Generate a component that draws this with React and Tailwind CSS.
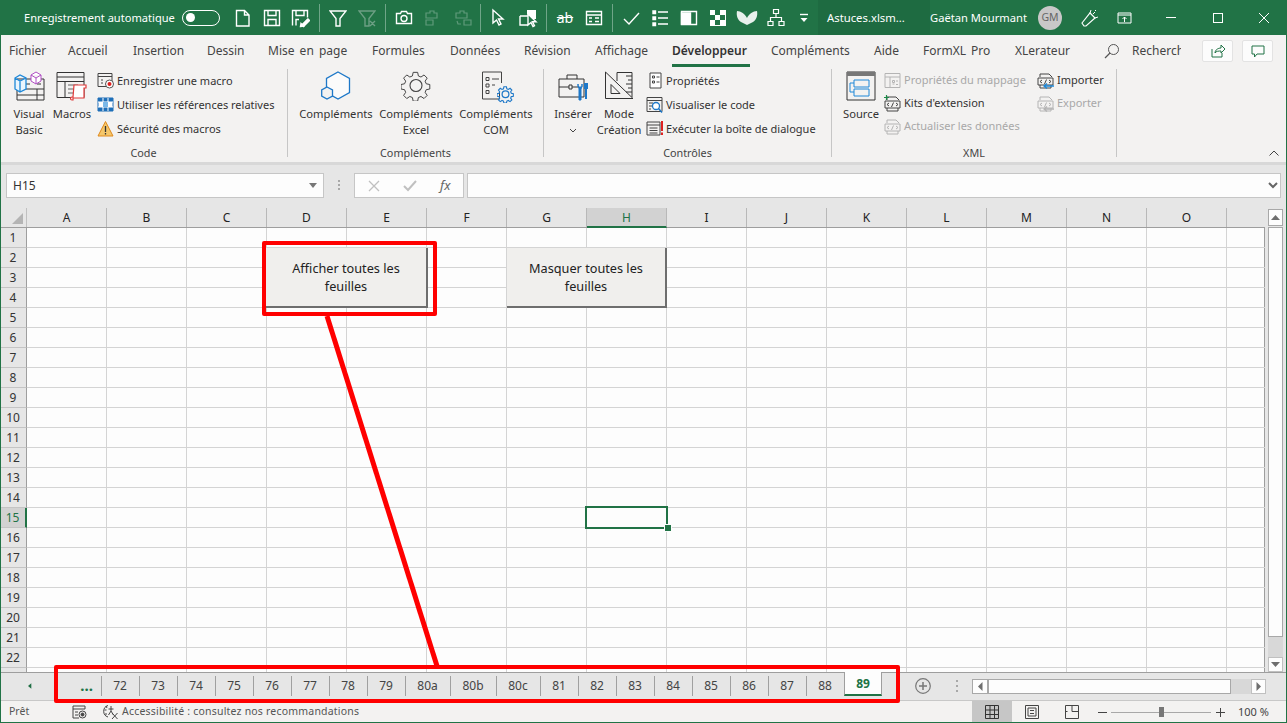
import React from "react";

const FONT = "font-['Open_Sans','Noto_Sans',sans-serif]";

/* ---------- title bar icons ---------- */
const W = ({ w = 20, h = 20, c = "#fff", children, sw = 1.4 }) => (
  <svg width={w} height={h} viewBox={`0 0 ${w} ${h}`} fill="none" stroke={c} strokeWidth={sw}>
    {children}
  </svg>
);
const Slot = ({ className = "", children }) => (
  <div className={`h-[35px] w-[28px] flex items-center justify-center shrink-0 ${className}`}>{children}</div>
);
const Sep = ({ className = "" }) => <div className={`w-px h-[28px] bg-[#6fa588] shrink-0 ${className}`} />;

const TitleIcons = () => (
  <div className="flex items-center">
    <Slot className="ml-[9px]"><W><path d="M3.5 2.5h8l4.5 4.5v11H3.5zM11.5 2.5V7H16" /></W></Slot>
    <Slot className="ml-px"><W><path d="M2.5 2.5h15v15h-15zM6 2.5v5h8v-5M6 17.5v-6h8v6" /></W></Slot>
    <Slot><W><path d="M2.5 17.5v-15h15v7M6 2.5v5h8v-5M6 17.5v-6h3M11 18l7-7M10.5 18.5l3-.5-2.500-2.500z" /><path d="M12 17l6-6 1.500 1.500-6 6z" fill="#fff" /></W></Slot>
    <Sep className="ml-[5px]" />
    <Slot className="ml-[4px]"><W w={18}><path d="M1 3h16l-6 7.500V18H7v-7.500z" /></W></Slot>
    <Slot className="ml-px"><W w={18} c="#6c9f84"><path d="M1 3h16l-6 7.500V18H7v-7.500zM12 13l5 5M17 13l-5 5" /></W></Slot>
    <Sep className="ml-[4px]" />
    <Slot className="ml-[4px]"><W w={18}><path d="M1.500 5.500h4l1-2h5l1 2h4v10h-15z" /><circle cx="9" cy="10.500" r="3" /></W></Slot>
    <Slot className="ml-px"><W c="#5f9a7a" sw={1.2}><path d="M7 3h4v2h3v5H3V5h4zM3 12h7v5H3z" /></W></Slot>
    <Slot className="ml-[2px]"><W c="#5f9a7a" sw={1.2}><path d="M7 3h4v2h3v5H3V5h4zM11 12h7v5h-7zM4 13l1 3h3" /></W></Slot>
    <Sep className="ml-[3px]" />
    <Slot className="ml-[3px]"><W><path d="M5 2v13l3.500-3 2.500 5 2-1-2.500-5h4.500z" /></W></Slot>
    <Slot className="ml-[2px]"><W><path d="M2 8h9M2 8v9h8" /><path d="M9 2h9v9l-4 0-5-5z" fill="#fff" stroke="none" /><path d="M10 6v11l3-2.500 2 4 1.500-.8-2-4H18z" fill="#217346" /></W></Slot>
    <Sep className="ml-[4px]" />
    <Slot className="ml-[4px]"><span className="text-white text-[14px] leading-none line-through">ab</span></Slot>
    <Slot className="ml-px"><W><path d="M2.500 3.500h15v13h-15zM2.500 7h15" /><path d="M5 10h3M5 13.500h3M11 10h4M11 13.500h4" /></W></Slot>
    <Sep className="ml-[4px]" />
    <Slot className="ml-[4px]"><W><path d="M3 11l5 5L18 5" /></W></Slot>
    <Slot className="ml-px"><W><path d="M3 3h2.500v2.500H3zM3 9h2.500v2.500H3zM3 15h2.500v2.500H3z" fill="#fff" /><path d="M8 4h10M8 10h10M8 16h10" /></W></Slot>
    <Slot className="ml-px"><W><path d="M2.500 3.500h15v13h-15z" /><path d="M2.500 5h9v11h-9z" fill="#fff" /></W></Slot>
    <Slot className="ml-px"><W w={18} h={18}><rect x="1" y="1" width="16" height="16" fill="#fff" stroke="none" /><path d="M6 1h5v5H6zM1 6h5v5H1zM11 6h5v5h-5zM6 11h5v5H6z" fill="#217346" stroke="none" /></W></Slot>
    <Slot className="ml-px"><W w={22} h={18}><path d="M1 2c4 0 8 3 10 7 2-4 6-7 10-7 1 5-1 9-4 11-2 1-4 2-6 3-2-1-4-2-6-3C2 11 0 7 1 2z" fill="#e8f0ec" stroke="none" /></W></Slot>
    <Slot className="ml-px"><W w={18} sw={1.2}><path d="M6.500 1.500h5v4h-5zM1 13.500h5v4H1zM12 13.500h5v4h-5zM9 5.500v4M3.500 13.500v-4h11v4" /></W></Slot>
    <Slot className="w-[27px]"><W w={10} h={10}><path d="M1 1.500h8" /><path d="M1.500 5h7L5 9z" fill="#fff" stroke="none" /></W></Slot>
  </div>
);

/* ---------- ribbon big icons ---------- */
const VB = () => (
  <svg width="32" height="30" viewBox="0 0 32 30" fill="none">
    <path d="M4 8h27v21H4zM4 18h27M4 24h27M24 18v11M12 13h5M24 13h4" stroke="#333" strokeWidth="1" />
    <path d="M18 4l5-3 5 3v6l-5 3-5-3zM18 4l5 3 5-3M23 7v6" stroke="#b04fc4" fill="#fff" strokeWidth="1" />
    <path d="M2 7l5-3 6 3v11l-6 3-5-3zM2 7l5 3 6-3M7 10v11" stroke="#1e88d8" fill="#eaf5fd" strokeWidth="1.300" />
  </svg>
);
const MacroI = () => (
  <svg width="32" height="30" viewBox="0 0 32 30" fill="none">
    <path d="M1 1.500h27v25H1zM1 6h27M1 10.500h27M9 10.500v16" stroke="#333" />
    <path d="M12 14h10M12 18h6M12 22h6" stroke="#666" />
    <path d="M18 14h12v3h-2v10h-11v2h-1c-2 0-2-3 0-3h1z" fill="#fff" stroke="#e03a3a" strokeWidth="1.200" />
  </svg>
);
const Hex = () => (
  <svg width="30" height="30" viewBox="0 0 30 30" fill="none" stroke="#1e78c8" strokeWidth="1.300">
    <path d="M17 1l11.500 6.500v14L17 28 5.500 21.500v-14z" fill="#fbfbfb" />
    <path d="M6 16l5.500 3v6L6 28 .7 25v-6z" fill="#f3f2f1" />
  </svg>
);
const Gear = ({ size = 30, color = "#444", sw = 1.1 }) => (
  <svg width={size} height={size} viewBox="0 0 30 30" fill="none" stroke={color} strokeWidth={sw}>
    <path d="M12.500 1.500h5l.8 4 2.900 1.200 3.400-2.300 3.500 3.500-2.300 3.400 1.200 2.900 4 .8v5l-4 .8-1.200 2.900 2.300 3.400-3.500 3.500-3.400-2.300-2.900 1.200-.8 4h-5l-.8-4-2.900-1.200-3.400 2.300-3.500-3.500 2.300-3.400-1.200-2.900-4-.8v-5l4-.8 1.200-2.900-2.300-3.400 3.500-3.500 3.400 2.300 2.900-1.200z" transform="scale(.9) translate(1 0)" />
    <circle cx="15" cy="14.500" r="6" />
  </svg>
);
const ComI = () => (
  <div className="relative w-[30px] h-[30px]">
    <svg width="30" height="30" viewBox="0 0 30 30" fill="none" stroke="#444">
      <path d="M1.500 1v27h17V21M1.500 1h19v11" />
      <path d="M5 6.500h3v3H5zM5 13h3v3H5zM5 19.500h3v3H5zM11 8h7M11 14h3" />
    </svg>
    <div className="absolute right-[-3px] bottom-[-2px]"><Gear size={17} color="#1e78c8" sw={2.200} /></div>
  </div>
);
const Brief = () => (
  <svg width="32" height="30" viewBox="0 0 32 30" fill="none">
    <path d="M2 8h25v18H2zM2 16h10M15 16h7M10 8V4h10v4" stroke="#333" />
    <path d="M12 14h3v4h-3z" stroke="#333" />
    <path d="M21 13c0 3 1 3 1 5v11h2V18c1-2 1-3 1-5v3h-4z" fill="#1e78c8" stroke="#1e78c8" />
    <path d="M27 12h4v6h-1v10h-2V18h-1z" fill="#1e78c8" />
  </svg>
);
const SetSq = () => (
  <svg width="30" height="30" viewBox="0 0 30 30" fill="none" stroke="#333">
    <path d="M1.500 1v26.500H29z" />
    <path d="M7 13.500v9h9zM13 10V1.500h15V26" />
    <path d="M22 5h6M24 9h4M22 13h6M24 17h4M22 21h6" />
  </svg>
);
const Src = () => (
  <svg width="30" height="30" viewBox="0 0 30 30" fill="none">
    <path d="M1 1h28v28H1z" stroke="#333" />
    <path d="M1 1h28v4H1z" fill="#777" />
    <path d="M8 9h15v7H8zM8 18h15v7H8zM8 12H4v9h4" stroke="#1e88d8" />
  </svg>
);
const Big = ({ icon, children, className = "" }) => (
  <div className={`flex flex-col items-center shrink-0 ${className}`}>
    <div className="h-[40px] pt-[5px] flex justify-center">{icon}</div>
    <div className="text-center leading-[16px] text-[11.200px] text-[#333] whitespace-pre-line">{children}</div>
  </div>
);

/* ---------- ribbon small icons ---------- */
const I16 = ({ children, w = 18 }) => (
  <svg width={w} height="18" viewBox={`0 0 ${w} 18`} fill="none" className="shrink-0">{children}</svg>
);
const RecI = () => (<I16><path d="M1 1.500h14v13H1zM1 4.500h14M4 8h2M4 11h2" stroke="#444" /><circle cx="12.500" cy="12" r="4" fill="#fff" stroke="#555" /><circle cx="12.500" cy="12" r="2" fill="#e02020" /></I16>);
const RefI = () => (<I16><path d="M1 2h15v13H1z" fill="#fff" stroke="#1e6fb8" /><path d="M1 2h15v4H1zM1 11h15v4H1z" fill="#1e6fb8" /><path d="M6 2v13M11 2v13M1 6h15M1 11h15" stroke="#fff" /><path d="M6 6h5v5H6z" fill="#7ab8e8" /></I16>);
const WarnI = () => (<I16><path d="M8.500 1.500L16 16H1z" fill="#f5c76a" stroke="#e08a1e" /><path d="M8.500 6v6M8.500 13v1.500" stroke="#333" strokeWidth="1.300" /></I16>);
const PropI = () => (<I16 w={16}><path d="M2 1h11v15H2z" fill="#fff" stroke="#444" /><path d="M4.500 4h2v2h-2zM4.500 9h2v2h-2zM8.500 5h3M8.500 10h3" stroke="#444" /></I16>);
const ViewI = () => (<I16><path d="M1 1.500h15v14H1zM1 4.500h15M3 7h4M3 10h3M3 13h2" stroke="#444" /><circle cx="10" cy="10" r="3.500" fill="#fff" stroke="#1e78c8" strokeWidth="1.300" /><path d="M12.500 12.500L16 16.500" stroke="#1e78c8" strokeWidth="1.500" /></I16>);
const RunI = () => (<I16><path d="M1 2h13v13H1zM1 5h13M3.500 8h8M3.500 10.500h8M3.500 13h8" stroke="#444" /><path d="M16 1v10M16 12.500v2.500" stroke="#e02020" strokeWidth="2" /></I16>);
const XmlBox = ({ c, plus, arrow }) => (
  <I16>
    <path d="M3 5V2h9l3 3M1 6h15v7H1zM3 13v3h11v-3" stroke={c} />
    <path d="M5 8l-2 1.500L5 11M12 8l2 1.500L12 11M9.500 7.500l-2 4.500" stroke={c} />
    {plus && <path d="M2.500 0v5M0 2.500h5" stroke="#1e8a4a" strokeWidth="1.200" />}
    {arrow && <path d="M17 14H7M10 11.500L7 14l3 2.500" stroke={arrow} strokeWidth="1.300" />}
  </I16>
);
const MapI = () => (<I16><path d="M1 1.500h15v14H1zM1 5h15M6 5v10.500M8.500 8.500h2v2h-2zM12 9h2M8.500 12h2M12 12.500h2" stroke="#b4b4b4" /></I16>);
const Small = ({ icon, children, disabled, className = "" }) => (
  <div className={`flex items-center whitespace-nowrap text-[11px] ${disabled ? "text-[#a8a8a8]" : "text-[#333]"} ${className}`}>
    {icon}<span className="ml-[2px]">{children}</span>
  </div>
);
const Group = ({ w, label, children }) => (
  <div className={`flex shrink-0 ${w}`}>
    <div className="flex-1 flex flex-col min-w-0">
      <div className="h-[79px] flex">{children}</div>
      <div className="h-[16px] leading-[16px] text-center text-[10.800px] text-[#444]">{label}</div>
    </div>
    <div className="w-px h-[88px] mt-[3px] bg-[#c6c6c6]" />
  </div>
);

/* ---------- tabs ---------- */
const TABS = [
  ["Fichier", "w-[59px]"], ["Accueil", "w-[65px]"], ["Insertion", "w-[74px]"], ["Dessin", "w-[61px]"],
  ["Mise en page", "w-[104px]"], ["Formules", "w-[78px]"], ["Données", "w-[74px]"], ["Révision", "w-[71px]"],
  ["Affichage", "w-[77px]"],
];
const TABS2 = [["Compléments", "w-[103px]"], ["Aide", "w-[49px]"], ["FormXL Pro", "w-[92px]"], ["XLerateur", "w-[89px]"]];

/* ---------- sheet ---------- */
const COLS = ["A","B","C","D","E","F","G","H","I","J","K","L","M","N","O",""];
const rows = Array.from({ length: 23 }, (_, i) => i + 1);
const cells = COLS.map((c, i) => i);

const Sheet = () => (
  <div className="w-[1265px] h-[464px] overflow-hidden">
    <div className="flex h-[20px] bg-[#e6e6e6] border-b border-[#9e9e9e]">
      <div className="w-[27px] shrink-0 border-r border-[#c0c0c0] relative">
        <div className="absolute left-[12px] top-[5px] w-[11px] h-[11px] bg-[#b4b4b4] [clip-path:polygon(100%_0,100%_100%,0_100%)]" />
      </div>
      {COLS.map((c) => (
        <div
          key={c || "p"}
          className={`shrink-0 flex items-center justify-center pt-px text-[12px] border-r border-[#b8b8b8] ${c === "" ? "w-[38px] border-r-0" : "w-[80px]"} ${c === "H" ? "bg-[#d2d2d2] text-[#217346] border-b-2 border-b-[#217346] -mb-px" : "text-[#222]"}`}
        >
          {c}
        </div>
      ))}
    </div>
    {rows.map((r) => (
      <div key={r} className="flex h-[20px] bg-[#fdfdfd] border-b border-[#d4d4d4]">
        <div className={`w-[27px] shrink-0 flex items-center justify-center pt-px text-[12px] -mb-px border-b ${r === 15 ? "bg-[#d2d2d2] text-[#217346] border-r-2 border-r-[#217346] border-b-[#c4c4c4]" : "bg-[#e6e6e6] text-[#333] border-r border-r-[#9e9e9e] border-b-[#c4c4c4]"}`}>
          {r <= 22 ? r : ""}
        </div>
        {cells.map((i) => (
          <div key={i} className={`shrink-0 border-r ${i === 15 ? "w-[38px] border-[#9e9e9e]" : "w-[80px] border-[#d4d4d4]"}`} />
        ))}
      </div>
    ))}
  </div>
);

const Arrow = ({ d }) => (
  <svg width="9" height="9" viewBox="0 0 9 9" fill="#6e6e6e"><path d={d} /></svg>
);

const VScroll = () => (
  <div className="w-[22px] h-[464px] bg-[#e6e6e6] pl-[3px] pt-px flex flex-col">
    <div className="w-[15px] h-[17px] bg-[#fdfdfd] border border-[#a8a8a8] flex items-center justify-center"><Arrow d="M0 7L4.500 2 9 7z" /></div>
    <div className="w-[15px] h-[412px] bg-[#fdfdfd] border border-[#a8a8a8] mt-px" />
    <div className="w-[15px] h-[20px] bg-[#d8d8d8]" />
    <div className="w-[15px] h-[15px] bg-[#fdfdfd] border border-[#c0c0c0] flex items-center justify-center"><Arrow d="M0 2h9L4.500 7z" /></div>
  </div>
);

const SHEETS = [
  ["72","w-[37px]"],["73","w-[37px]"],["74","w-[37px]"],["75","w-[37px]"],["76","w-[37px]"],["77","w-[37px]"],["78","w-[37px]"],["79","w-[37px]"],
  ["80a","w-[44px]"],["80b","w-[45px]"],["80c","w-[43px]"],
  ["81","w-[37px]"],["82","w-[37px]"],["83","w-[37px]"],["84","w-[37px]"],["85","w-[37px]"],["86","w-[37px]"],["87","w-[37px]"],["88","w-[37px]"],
];

const TabBar = () => (
  <div className="h-[28px] bg-[#e6e6e6] border-t border-[#9e9e9e] flex">
    <div className="w-[58px] shrink-0 flex items-center text-[#217346] pb-[2px]">
      <svg width="6" height="8" viewBox="0 0 6 8" className="ml-[28px]" fill="#1f6e43"><path d="M5 0v8L0 4z" /></svg>
      <svg width="6" height="8" viewBox="0 0 6 8" className="ml-[22px]" fill="#c8c8c8"><path d="M0 0v8l5-4z" /></svg>
    </div>
    <div className="w-[43px] shrink-0 flex items-center justify-end pr-[8px] text-[15px] font-bold text-[#217346] leading-none pb-[2px]">...</div>
    {SHEETS.map(([n, w]) => (
      <React.Fragment key={n}>
        <div className="w-px h-[20px] mt-[3px] bg-[#a0a0a0] shrink-0" />
        <div className={`${w} h-[23px] pt-[2px] pr-px shrink-0 flex items-center justify-center text-[12px] text-[#444]`}>{n}</div>
      </React.Fragment>
    ))}
    <div className="w-[38px] h-[24px] -mt-px pt-[2px] bg-[#fdfdfd] border-x border-[#9e9e9e] border-b-2 border-b-[#217346] shrink-0 flex items-center justify-center text-[12px] font-bold text-[#217346]">89</div>
    <div className="w-[34px] shrink-0" />
    <svg width="16" height="16" viewBox="0 0 16 16" fill="none" stroke="#777" className="shrink-0 ml-[-1px] mt-[5px]"><circle cx="8" cy="8" r="7.300" strokeWidth="1.200" /><path d="M4 8h8M8 4v8" strokeWidth="1.500" /></svg>
    <div className="ml-[25px] mt-[7px] flex flex-col gap-[3px] shrink-0">
      <div className="w-[2px] h-[2px] bg-[#a8a8a8]" /><div className="w-[2px] h-[2px] bg-[#a8a8a8]" /><div className="w-[2px] h-[2px] bg-[#a8a8a8]" />
    </div>
    <div className="ml-[14px] mt-[6px] h-[15px] flex shrink-0">
      <div className="w-[16px] bg-[#fdfdfd] border border-[#a8a8a8] flex items-center justify-center"><Arrow d="M6.500 0v9L2 4.500z" /></div>
      <div className="w-[243px] bg-[#fdfdfd] border border-[#a8a8a8]" />
      <div className="w-[20px] bg-[#d8d8d8]" />
      <div className="w-[15px] bg-[#fdfdfd] border border-[#c0c0c0] flex items-center justify-center"><Arrow d="M2.500 0v9L7 4.500z" /></div>
    </div>
  </div>
);

const StatusBar = () => (
  <div className="h-[23px] bg-[#f3f2f1] border-t border-[#c8c8c8] flex items-center text-[10.500px] text-[#555]">
    <div className="ml-[9px] w-[63px] pb-px text-[10.500px]">Prêt</div>
    <svg width="15" height="14" viewBox="0 0 15 14" fill="none" stroke="#444" className="shrink-0"><path d="M1 1h12v3H1zM1 4v9h6M3 7h3M3 10h3" /><circle cx="10.500" cy="9.500" r="3.500" /><circle cx="10.500" cy="9.500" r="1.500" fill="#444" /></svg>
    <svg width="16" height="16" viewBox="0 0 16 16" fill="none" stroke="#444" className="ml-[16px] shrink-0"><path d="M5 1.500A6 6 0 0 0 5 13M3 2l1 2M1.500 6h2M2 10h2" /><path d="M8 2v5M5.500 5h5M8 7l-2.500 4M8 7l2.500 4M9 9l5.500 6M14.500 9L9 15" /></svg>
    <div className="ml-[3px] w-[850px] pb-px whitespace-nowrap tracking-[.2px]">Accessibilité : consultez nos recommandations</div>
    <div className="w-[40px] h-[22px] bg-[#c6c6c6] flex items-center justify-center shrink-0">
      <svg width="14" height="14" viewBox="0 0 14 14" fill="none" stroke="#333"><path d="M.5.500h13v13H.5zM5 .5v13M9.500.5v13M.5 5h13M.5 9.500h13" /></svg>
    </div>
    <div className="w-[40px] flex items-center justify-center shrink-0">
      <svg width="14" height="14" viewBox="0 0 14 14" fill="none" stroke="#444"><path d="M.5.500h13v13H.5zM3 3h8v8H3zM5 5.500h4M5 8.500h4" /></svg>
    </div>
    <div className="w-[40px] flex items-center justify-center shrink-0">
      <svg width="14" height="14" viewBox="0 0 14 14" fill="none" stroke="#444"><path d="M.5.500h13v13H.5zM7 .5v6M.5 6.500h2M7 6.500h6.500" /></svg>
    </div>
    <div className="ml-[6px] w-[9px] h-px bg-[#444] shrink-0" />
    <div className="ml-[4px] w-[100px] h-[14px] relative shrink-0 flex items-center">
      <div className="w-full h-px bg-[#a8a8a8]" />
      <div className="absolute left-[48px] top-[2px] w-[5px] h-[10px] bg-[#777]" />
    </div>
    <svg width="9" height="9" viewBox="0 0 9 9" stroke="#444" className="ml-[5px] shrink-0"><path d="M0 4.500h9M4.500 0v9" /></svg>
    <div className="ml-[13px] whitespace-nowrap text-[11px] text-[#444]">100 %</div>
  </div>
);

export default function App() {
  return (
    <div className={`relative w-[1287px] h-[723px] overflow-hidden bg-[#f3f2f1] ${FONT}`}>
      {/* Title bar */}
      <div className="h-[35px] bg-[#217346] flex items-center text-white">
        <div className="ml-[24px] w-[158px] pt-px text-[11.100px] whitespace-nowrap">Enregistrement automatique</div>
        <div className="w-[38px] h-[16px] rounded-full border border-white flex items-center pl-[3px] shrink-0">
          <div className="w-[9px] h-[9px] rounded-full bg-white" />
        </div>
        <TitleIcons />
        <div className="h-[35px] w-[112px] bg-[#1e6b41] pl-[9px] pt-px flex items-center text-[11.300px] whitespace-nowrap shrink-0">Astuces.xlsm...</div>
        <div className="text-[11.200px] pt-px whitespace-nowrap w-[108px] shrink-0">Gaëtan Mourmant</div>
        <div className="w-[24px] h-[24px] rounded-full bg-[#c8c8c8] text-[#666] text-[10.500px] flex items-center justify-center shrink-0">GM</div>
        <svg width="18" height="18" viewBox="0 0 18 18" fill="none" stroke="#fff" className="ml-[19px] shrink-0"><path d="M1 14l8-10 5 5-9 8H3z" strokeWidth="1.200" /><path d="M9 4l1-3M14 9l3-1M12 5l2-2M14 1l1 1" /></svg>
        <svg width="16" height="14" viewBox="0 0 16 14" fill="none" stroke="#fff" className="ml-[18px] shrink-0"><path d="M1 2h13v10H1zM1 4h13M7.500 11V6M5.500 8l2-2 2 2" /></svg>
        <div className="ml-[33px] w-[10px] h-px bg-white shrink-0" />
        <div className="ml-[37px] w-[10px] h-[10px] border border-white shrink-0" />
        <svg width="12" height="12" viewBox="0 0 12 12" stroke="#fff" className="ml-[35px] shrink-0"><path d="M1 1l10 10M11 1L1 11" /></svg>
      </div>

      {/* Ribbon tabs */}
      <div className="h-[31px] flex items-center text-[12px] text-[#444] pl-[9px] whitespace-nowrap [word-spacing:2px]">
        {TABS.map(([t, w]) => <div key={t} className={`${w} shrink-0`}>{t}</div>)}
        <div className="w-[99px] shrink-0 relative font-semibold text-[#333]">
          Développeur
          <div className="absolute left-0 top-[22px] w-[78px] h-[3px] bg-[#217346]" />
        </div>
        {TABS2.map(([t, w]) => <div key={t} className={`${w} shrink-0`}>{t}</div>)}
        <svg width="16" height="16" viewBox="0 0 16 16" fill="none" stroke="#555" className="shrink-0"><circle cx="9.500" cy="6.500" r="5" /><path d="M6 10l-5 5" strokeWidth="1.300" /></svg>
        <div className="ml-[12px] w-[49px] overflow-hidden shrink-0">Rechercher</div>
        <div className="ml-[21px] w-[31px] h-[22px] bg-[#fcfcfc] border border-[#e3e3e3] rounded-[2px] flex items-center justify-center shrink-0">
          <svg width="14" height="14" viewBox="0 0 14 14" fill="none" stroke="#217346"><path d="M1 5v8h10V9M4 9c0-3 3-5 6-5V1l4 4-4 4V7C8 7 5 7 4 9z" /></svg>
        </div>
        <div className="ml-[9px] w-[31px] h-[22px] bg-[#fcfcfc] border border-[#e3e3e3] rounded-[2px] flex items-center justify-center shrink-0">
          <svg width="14" height="14" viewBox="0 0 14 14" fill="none" stroke="#217346"><path d="M1 2h12v8H6l-2.500 3v-3H1z" /></svg>
        </div>
      </div>

      {/* Ribbon */}
      <div className="h-[96px] flex">
        <Group w="w-[288px]" label="Code">
          <Big className="w-[42px] ml-[8px]" icon={<VB />}>{"Visual\nBasic"}</Big>
          <Big className="w-[44px]" icon={<MacroI />}>Macros</Big>
          <div className="ml-[3px] pt-[3px] flex flex-col">
            <Small className="h-[24px]" icon={<RecI />}>Enregistrer une macro</Small>
            <Small className="h-[24px]" icon={<RefI />}>Utiliser les références relatives</Small>
            <Small className="h-[24px]" icon={<WarnI />}>Sécurité des macros</Small>
          </div>
        </Group>
        <Group w="w-[256px]" label="Compléments">
          <Big className="w-[80px] ml-[8px]" icon={<Hex />}>Compléments</Big>
          <Big className="w-[80px]" icon={<Gear />}>{"Compléments\nExcel"}</Big>
          <Big className="w-[80px]" icon={<ComI />}>{"Compléments\nCOM"}</Big>
        </Group>
        <Group w="w-[288px]" label="Contrôles">
          <Big className="w-[40px] ml-[9px]" icon={<Brief />}>
            Insérer
            <svg width="8" height="5" viewBox="0 0 8 5" fill="none" stroke="#444" className="mx-auto mt-[6px]"><path d="M1 1l3 3 3-3" /></svg>
          </Big>
          <Big className="w-[44px] ml-[4px]" icon={<SetSq />}>{"Mode\nCréation"}</Big>
          <div className="ml-[5px] pt-[3px] flex flex-col">
            <Small className="h-[24px] pl-[2px]" icon={<PropI />}>Propriétés</Small>
            <Small className="h-[24px]" icon={<ViewI />}>Visualiser le code</Small>
            <Small className="h-[24px]" icon={<RunI />}>Exécuter la boîte de dialogue</Small>
          </div>
        </Group>
        <Group w="w-[285px]" label="XML">
          <Big className="w-[40px] ml-[9px]" icon={<Src />}>Source</Big>
          <div className="ml-[3px] w-[153px] pt-[3px] flex flex-col">
            <Small disabled className="h-[23px]" icon={<MapI />}>Propriétés du mappage</Small>
            <Small className="h-[23px]" icon={<XmlBox c="#444" plus />}>Kits d'extension</Small>
            <Small disabled className="h-[23px]" icon={<XmlBox c="#b4b4b4" />}>Actualiser les données</Small>
          </div>
          <div className="pt-[3px] flex flex-col">
            <Small className="h-[23px]" icon={<XmlBox c="#444" arrow="#1e88d8" />}>Importer</Small>
            <Small disabled className="h-[23px]" icon={<XmlBox c="#b4b4b4" arrow="#b4b4b4" />}>Exporter</Small>
          </div>
        </Group>
        <div className="flex-1 flex items-end justify-end pr-[8px] pb-[6px]">
          <svg width="10" height="6" viewBox="0 0 10 6" fill="none" stroke="#444"><path d="M.5 5.500L5 1l4.500 4.500" /></svg>
        </div>
      </div>

      {/* Formula bar */}
      <div className="h-[46px] bg-[#e6e6e6] border-t-[3px] border-[#d8d8d8] flex items-start pt-[8px]">
        <div className="ml-[6px] w-[318px] h-[25px] bg-[#fdfdfd] border border-[#c6c6c6] flex items-center justify-between pl-[6px] pr-[6px] text-[12px] text-[#333] shrink-0">
          H15
          <svg width="8" height="5" viewBox="0 0 8 5" fill="#777"><path d="M0 0h8L4 5z" /></svg>
        </div>
        <div className="ml-[14px] mt-[7px] flex flex-col gap-[2px] shrink-0">
          <div className="w-[2px] h-[2px] bg-[#a8a8a8]" /><div className="w-[2px] h-[2px] bg-[#a8a8a8]" /><div className="w-[2px] h-[2px] bg-[#a8a8a8]" />
        </div>
        <div className="ml-[14px] w-[110px] h-[25px] bg-[#fdfdfd] border border-[#c6c6c6] flex items-center shrink-0">
          <svg width="12" height="12" viewBox="0 0 12 12" stroke="#c0c0c0" strokeWidth="1.300" className="ml-[13px]"><path d="M1 1l10 10M11 1L1 11" /></svg>
          <svg width="14" height="12" viewBox="0 0 14 12" fill="none" stroke="#c0c0c0" strokeWidth="2" className="ml-[23px]"><path d="M1 6l4 4 8-9" /></svg>
          <span className="ml-[23px] italic font-['Liberation_Serif',serif] text-[13px] text-[#666]">fx</span>
        </div>
        <div className="ml-[3px] w-[814px] h-[25px] bg-[#fdfdfd] border border-[#c6c6c6] flex items-center justify-end pr-[1px] shrink-0">
          <svg width="10" height="7" viewBox="0 0 10 7" fill="none" stroke="#666" strokeWidth="2" className="mr-[1px]"><path d="M1 1l4 4 4-4" /></svg>
        </div>
      </div>

      {/* Sheet + vertical scrollbar */}
      <div className="flex">
        <Sheet />
        <VScroll />
      </div>
      <TabBar />
      <StatusBar />

      {/* Window frame */}
      <div className="absolute left-0 right-0 top-[35px] bottom-0 border-x border-b border-[#217346] pointer-events-none" />

      {/* Buttons on sheet */}
      <div className="absolute left-[266px] top-[248px] w-[162px] h-[60px] bg-[#f0efed] border-r-2 border-b-2 border-[#6e6e6e] flex items-center justify-center text-center text-[12.700px] leading-[18px] text-[#222] px-[10px]">
        Afficher toutes les feuilles
      </div>
      <div className="absolute left-[507px] top-[248px] w-[160px] h-[60px] bg-[#f0efed] border-r-2 border-b-2 border-[#6e6e6e] flex items-center justify-center text-center text-[12.700px] leading-[18px] text-[#222] px-[10px]">
        Masquer toutes les feuilles
      </div>

      {/* Selected cell */}
      <div className="absolute left-[585px] top-[506px] w-[83px] h-[23px] border-2 border-[#217346]" />
      <div className="absolute left-[664px] top-[524px] w-[6px] h-[6px] bg-[#217346] border border-[#fdfdfd] box-content" />

      {/* Red annotation */}
      <svg className="absolute left-0 top-0 pointer-events-none" width="1287" height="723" fill="none">
        <path d="M327 316L437 666" stroke="#ff0000" strokeWidth="5" />
      </svg>
      <div className="absolute left-[262px] top-[241px] w-[175px] h-[75px] border-[4px] border-[#ff0000] rounded-[2px]" />
      <div className="absolute left-[54px] top-[665px] w-[846px] h-[38px] border-[4px] border-[#ff0000] rounded-[2px]" />
    </div>
  );
}
